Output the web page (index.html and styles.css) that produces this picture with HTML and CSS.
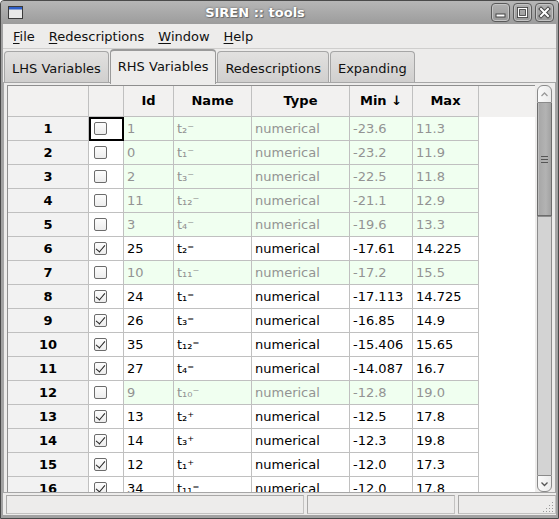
FILE: index.html
```html
<!DOCTYPE html>
<html>
<head>
<meta charset="utf-8">
<link rel="stylesheet" href="styles.css">
</head>
<body>
<div class="window">
  <div class="titlebar">
    <svg class="appicon" width="15" height="13" viewBox="0 0 15 13"><rect x="0.5" y="0.5" width="14" height="12" fill="#e8e8e8" stroke="#3a3a3a"/><rect x="1" y="1" width="13" height="2.5" fill="#2f5fc8"/></svg>
    <div class="title">SIREN :: tools</div>
    <div class="wbtns">
      <div class="wbtn"><svg width="17" height="17" viewBox="0 0 17 17"><rect x="4" y="10" width="9" height="3" fill="#fff" stroke="#444" stroke-width="1"/></svg></div>
      <div class="wbtn"><svg width="17" height="17" viewBox="0 0 17 17"><rect x="4.5" y="4.5" width="8" height="8" fill="none" stroke="#444" stroke-width="3"/><rect x="4.5" y="4.5" width="8" height="8" fill="none" stroke="#fff" stroke-width="1.2"/></svg></div>
      <div class="wbtn"><svg width="17" height="17" viewBox="0 0 17 17"><path d="M5 5 L12 12 M12 5 L5 12" stroke="#444" stroke-width="4" stroke-linecap="square"/><path d="M5 5 L12 12 M12 5 L5 12" stroke="#fff" stroke-width="2" stroke-linecap="square"/></svg></div>
    </div>
  </div>
  <div class="client">
    <div class="menubar">
      <span class="mi"><u>F</u>ile</span>
      <span class="mi"><u>R</u>edescriptions</span>
      <span class="mi"><u>W</u>indow</span>
      <span class="mi"><u>H</u>elp</span>
    </div>
    <div class="tabs">
      <div class="tab">LHS Variables</div>
      <div class="tab sel">RHS Variables</div>
      <div class="tab">Redescriptions</div>
      <div class="tab">Expanding</div>
    </div>
    <div class="panel">
      <div class="viewport">
        <div class="grid">
          <div class="hc"></div><div class="hc"></div><div class="hc">Id</div><div class="hc">Name</div><div class="hc">Type</div><div class="hc">Min ↓</div><div class="hc">Max</div>

          <div class="rh">1</div><div class="cb off focus"><span class="box"></span></div><div class="c off">1</div><div class="c off">t₂⁻</div><div class="c off">numerical</div><div class="c off">-23.6</div><div class="c off">11.3</div>
          <div class="rh">2</div><div class="cb off"><span class="box"></span></div><div class="c off">0</div><div class="c off">t₁⁻</div><div class="c off">numerical</div><div class="c off">-23.2</div><div class="c off">11.9</div>
          <div class="rh">3</div><div class="cb off"><span class="box"></span></div><div class="c off">2</div><div class="c off">t₃⁻</div><div class="c off">numerical</div><div class="c off">-22.5</div><div class="c off">11.8</div>
          <div class="rh">4</div><div class="cb off"><span class="box"></span></div><div class="c off">11</div><div class="c off">t₁₂⁻</div><div class="c off">numerical</div><div class="c off">-21.1</div><div class="c off">12.9</div>
          <div class="rh">5</div><div class="cb off"><span class="box"></span></div><div class="c off">3</div><div class="c off">t₄⁻</div><div class="c off">numerical</div><div class="c off">-19.6</div><div class="c off">13.3</div>
          <div class="rh">6</div><div class="cb"><span class="box on"></span></div><div class="c">25</div><div class="c">t₂⁼</div><div class="c">numerical</div><div class="c">-17.61</div><div class="c">14.225</div>
          <div class="rh">7</div><div class="cb off"><span class="box"></span></div><div class="c off">10</div><div class="c off">t₁₁⁻</div><div class="c off">numerical</div><div class="c off">-17.2</div><div class="c off">15.5</div>
          <div class="rh">8</div><div class="cb"><span class="box on"></span></div><div class="c">24</div><div class="c">t₁⁼</div><div class="c">numerical</div><div class="c">-17.113</div><div class="c">14.725</div>
          <div class="rh">9</div><div class="cb"><span class="box on"></span></div><div class="c">26</div><div class="c">t₃⁼</div><div class="c">numerical</div><div class="c">-16.85</div><div class="c">14.9</div>
          <div class="rh">10</div><div class="cb"><span class="box on"></span></div><div class="c">35</div><div class="c">t₁₂⁼</div><div class="c">numerical</div><div class="c">-15.406</div><div class="c">15.65</div>
          <div class="rh">11</div><div class="cb"><span class="box on"></span></div><div class="c">27</div><div class="c">t₄⁼</div><div class="c">numerical</div><div class="c">-14.087</div><div class="c">16.7</div>
          <div class="rh">12</div><div class="cb off"><span class="box"></span></div><div class="c off">9</div><div class="c off">t₁₀⁻</div><div class="c off">numerical</div><div class="c off">-12.8</div><div class="c off">19.0</div>
          <div class="rh">13</div><div class="cb"><span class="box on"></span></div><div class="c">13</div><div class="c">t₂⁺</div><div class="c">numerical</div><div class="c">-12.5</div><div class="c">17.8</div>
          <div class="rh">14</div><div class="cb"><span class="box on"></span></div><div class="c">14</div><div class="c">t₃⁺</div><div class="c">numerical</div><div class="c">-12.3</div><div class="c">19.8</div>
          <div class="rh">15</div><div class="cb"><span class="box on"></span></div><div class="c">12</div><div class="c">t₁⁺</div><div class="c">numerical</div><div class="c">-12.0</div><div class="c">17.3</div>
          <div class="rh">16</div><div class="cb"><span class="box on"></span></div><div class="c">34</div><div class="c">t₁₁⁼</div><div class="c">numerical</div><div class="c">-12.0</div><div class="c">17.8</div>
        </div>
      </div>
      <div class="scrollbar">
        <div class="sb-up"><svg width="13" height="8" viewBox="0 0 13 8"><path d="M3.5 6 L6.5 3 L9.5 6" fill="none" stroke="#9a9a9a" stroke-width="1.3"/></svg></div>
        <div class="sb-thumb"><span></span><span></span><span></span></div>
        <div class="sb-track"></div>
        <div class="sb-down"><svg width="13" height="8" viewBox="0 0 13 8"><path d="M3.5 2.5 L6.5 5.5 L9.5 2.5" fill="none" stroke="#555" stroke-width="1.3"/></svg></div>
      </div>
    </div>
    <div class="statusbar">
      <div class="seg s1"></div>
      <div class="seg s2"></div>
      <div class="seg s3"><svg class="grip" width="11" height="11" viewBox="0 0 11 11"><g fill="#9a9a9a"><rect x="9" y="1" width="1" height="1"/><rect x="6" y="4" width="1" height="1"/><rect x="9" y="4" width="1" height="1"/><rect x="3" y="7" width="1" height="1"/><rect x="6" y="7" width="1" height="1"/><rect x="9" y="7" width="1" height="1"/><rect x="0" y="10" width="1" height="1"/><rect x="3" y="10" width="1" height="1"/><rect x="6" y="10" width="1" height="1"/><rect x="9" y="10" width="1" height="1"/></g></svg></div>
    </div>
  </div>
</div>
</body>
</html>
```

FILE: styles.css
```css
* { box-sizing: border-box; }
html, body { margin: 0; padding: 0; }
body {
  width: 559px;
  height: 519px;
  overflow: hidden;
  font-family: "DejaVu Sans", sans-serif;
  font-size: 13px;
  color: #000;
  background: #fff;
}
.window {
  width: 559px;
  height: 519px;
  border: 1px solid #4a4a4a;
  border-radius: 4px 4px 0 0;
  background: #a2a2a2;
  display: flex;
  flex-direction: column;
}
.titlebar {
  height: 23px;
  flex: none;
  display: flex;
  align-items: center;
  background: linear-gradient(#b6b6b6, #9c9c9c);
  border-radius: 3px 3px 0 0;
}
.appicon { margin-left: 7px; flex: none; }
.title {
  flex: 1;
  text-align: center;
  font-weight: bold;
  font-size: 13px;
  color: #fff;
  text-shadow: 0 0 2px #555, 1px 1px 0 #777;
  padding-right: 4px;
}
.wbtns { display: flex; gap: 3px; margin-right: 4px; }
.wbtn {
  width: 19px;
  height: 19px;
  border: 1px solid #5a5a5a;
  border-radius: 4px;
  background: linear-gradient(#b0b0b0, #989898);
  box-shadow: inset 0 0 0 1px #c4c4c4;
  display: flex;
  align-items: center;
  justify-content: center;
}
.client {
  flex: 1;
  margin: 0 2px 3px 2px;
  background: #edeceb;
  display: flex;
  flex-direction: column;
}
.menubar {
  height: 25px;
  flex: none;
  display: flex;
  align-items: center;
  padding-left: 3px;
  padding-top: 1px;
  border-bottom: 1px solid #cfcecd;
  font-size: 13px;
  color: #111;
}
.mi { padding: 0 7px; line-height: 24px; }
.mi u { text-decoration-thickness: 1px; text-underline-offset: 2px; }
.tabs {
  height: 33px;
  flex: none;
  display: flex;
  align-items: flex-end;
  padding-left: 1px;
}
.tab {
  height: 31px;
  padding: 2px 7px 0 7px;
  border: 1px solid #a6a6a6;
  border-bottom: none;
  border-radius: 4px 4px 0 0;
  background: linear-gradient(#e2e1e0, #d0cfce);
  display: flex;
  align-items: center;
  margin-right: 1px;
  color: #111;
}
.tab.sel {
  height: 35px;
  margin-bottom: -2px;
  background: #edeceb;
  border-top: 2px solid #8f8f8f;
  border-color: #9a9a9a;
  padding-top: 0;
  padding-bottom: 3px;
  position: relative;
  z-index: 1;
}
.panel {
  height: 411px;
  flex: none;
  border: 1px solid #a6a6a6;
  display: flex;
  padding: 2px 2px 0 3px;
  gap: 2px;
}
.viewport {
  width: 528px;
  height: 407px;
  border-left: 1px solid #8e8e8e;
  border-top: 1px solid #8e8e8e;
  overflow: hidden;
  background: linear-gradient(#f2f1f0 0 31px, #fff 31px);
}
.grid {
  display: grid;
  grid-template-columns: 81px 35px 50px 78px 98px 63px 66px;
  grid-template-rows: 31px;
  grid-auto-rows: 24px;
  width: 471px;
}
.grid > div {
  border-right: 1px solid #c0c0c0;
  border-bottom: 1px solid #c0c0c0;
  display: flex;
  align-items: center;
  white-space: nowrap;
  overflow: hidden;
  padding-bottom: 1px;
}
.grid > div.hc { padding-bottom: 2px; }
.hc {
  background: #f2f1f0;
  font-weight: bold;
  justify-content: center;
}
.rh {
  background: #f2f2f2;
  font-weight: bold;
  justify-content: center;
}
.c { padding-left: 3px; background: #fff; color: #000; }
.c.off { background: #f0fff0; color: #939393; }
.cb { background: #fff; padding-left: 5px; }
.cb.focus { outline: 2px solid #000; outline-offset: -2px; }
.box {
  width: 13px;
  height: 13px;
  border: 1px solid #6c6c6c;
  border-radius: 2px;
  background: linear-gradient(#fdfdfd, #ececec);
  position: relative;
}
.box.on::after {
  content: "";
  position: absolute;
  left: 3px;
  top: 0px;
  width: 4px;
  height: 8px;
  border-right: 1.6px solid #222;
  border-bottom: 1.6px solid #222;
  transform: rotate(40deg);
}
.scrollbar {
  width: 15px;
  height: 407px;
  display: flex;
  flex-direction: column;
}
.sb-up {
  height: 18px;
  flex: none;
  border: 1px solid #8a8a8a;
  border-radius: 6px 6px 0 0;
  background: linear-gradient(90deg, #fafafa, #ebebeb);
  display: flex;
  justify-content: center;
  align-items: center;
}
.sb-thumb {
  height: 113px;
  flex: none;
  border: 1px solid #6c6c6c;
  border-top: none;
  background: linear-gradient(90deg, #a6a6a6, #b3b3b3 60%, #a2a2a2);
  box-shadow: inset 1px 0 0 #bdbdbd;
  display: flex;
  flex-direction: column;
  align-items: center;
  justify-content: center;
  gap: 2px;
}
.sb-thumb span { width: 7px; height: 1px; background: #555; }
.sb-track {
  flex: 1;
  background: #d3d3d3;
  border-left: 1px solid #8c8c8c;
  border-right: 1px solid #8c8c8c;
  border-top: 1px solid #8c8c8c;
}
.sb-down {
  height: 17px;
  flex: none;
  border: 1px solid #8a8a8a;
  border-radius: 0 0 6px 6px;
  background: linear-gradient(90deg, #fafafa, #ebebeb);
  display: flex;
  justify-content: center;
  align-items: center;
}
.statusbar {
  flex: 1;
  display: flex;
  gap: 3px;
  padding: 2px 0 1px 3px;
}
.seg {
  border: 1px solid #c3c2c1;
  border-top-color: #a9a8a7;
  border-left-color: #a9a8a7;
  background: #edeceb;
}
.s1 { width: 298px; }
.s2 { width: 148px; }
.s3 { flex: 1; position: relative; }
.grip { position: absolute; right: 1px; bottom: 1px; }
```
